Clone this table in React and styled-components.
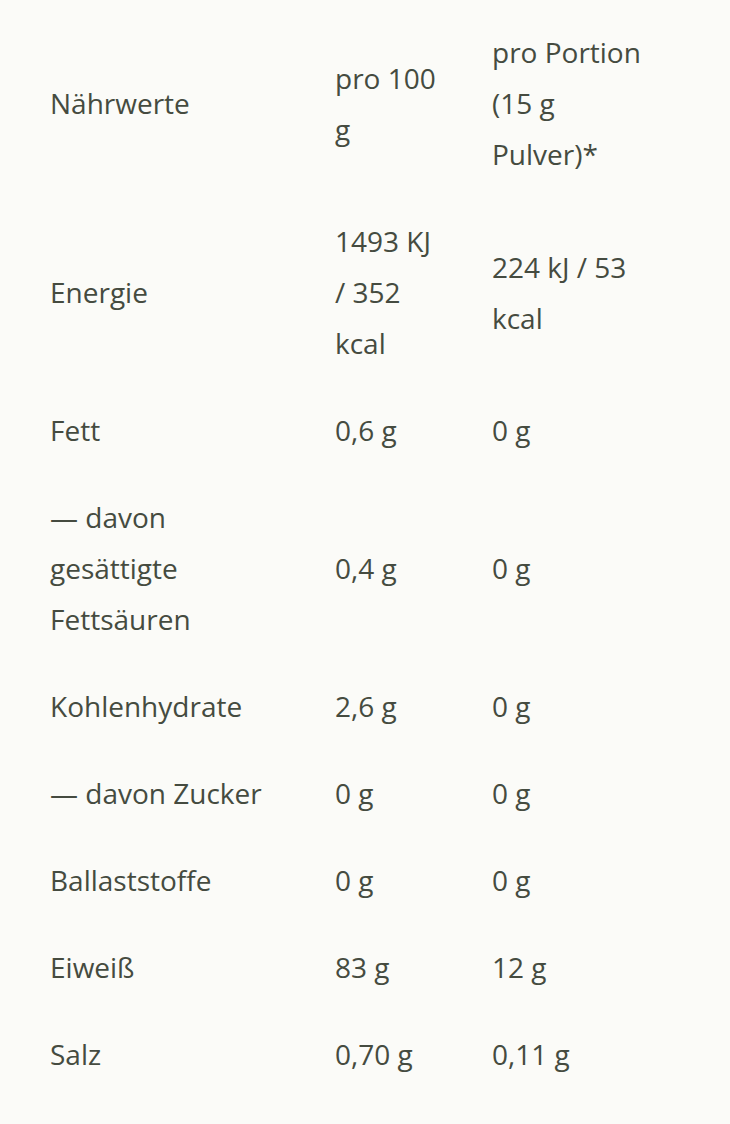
import React from 'react';
import styled, { createGlobalStyle } from 'styled-components';

const GlobalStyle = createGlobalStyle`
  html, body {
    margin: 0;
    padding: 0;
    background: #fbfbf8;
  }
  body {
    font-family: "Open Sans", "Noto Sans", sans-serif;
    color: #454b40;
  }
`;

const Page = styled.div`
  padding: 9px 0 0 50px;
`;

const Table = styled.table`
  border-collapse: collapse;
  table-layout: fixed;
  width: 659px;
  font-size: 28px;
  line-height: 51px;
`;

const Col = styled.col`
  width: ${(p) => (p.$w ? `${p.$w}px` : 'auto')};
`;

const Row = styled.tr`
  background: transparent;
`;

const Cell = styled.td`
  padding: 18px 47px 18px 0;
  vertical-align: middle;
  text-align: left;
  font-weight: 400;
`;

const rows = [
  ['Nährwerte', 'pro 100 g', 'pro Portion (15 g Pulver)*'],
  ['Energie', '1493 KJ / 352 kcal', '224 kJ / 53 kcal'],
  ['Fett', '0,6 g', '0 g'],
  ['— davon gesättigte Fettsäuren', '0,4 g', '0 g'],
  ['Kohlenhydrate', '2,6 g', '0 g'],
  ['— davon Zucker', '0 g', '0 g'],
  ['Ballaststoffe', '0 g', '0 g'],
  ['Eiweiß', '83 g', '12 g'],
  ['Salz', '0,70 g', '0,11 g'],
];

export default function App() {
  return (
    <>
      <GlobalStyle />
      <Page>
        <Table>
          <colgroup>
            <Col $w={285} />
            <Col $w={157} />
            <Col />
          </colgroup>
          <tbody>
            {rows.map((r) => (
              <Row key={r[0]}>
                {r.map((c, i) => (
                  <Cell key={i}>{c}</Cell>
                ))}
              </Row>
            ))}
          </tbody>
        </Table>
      </Page>
    </>
  );
}
